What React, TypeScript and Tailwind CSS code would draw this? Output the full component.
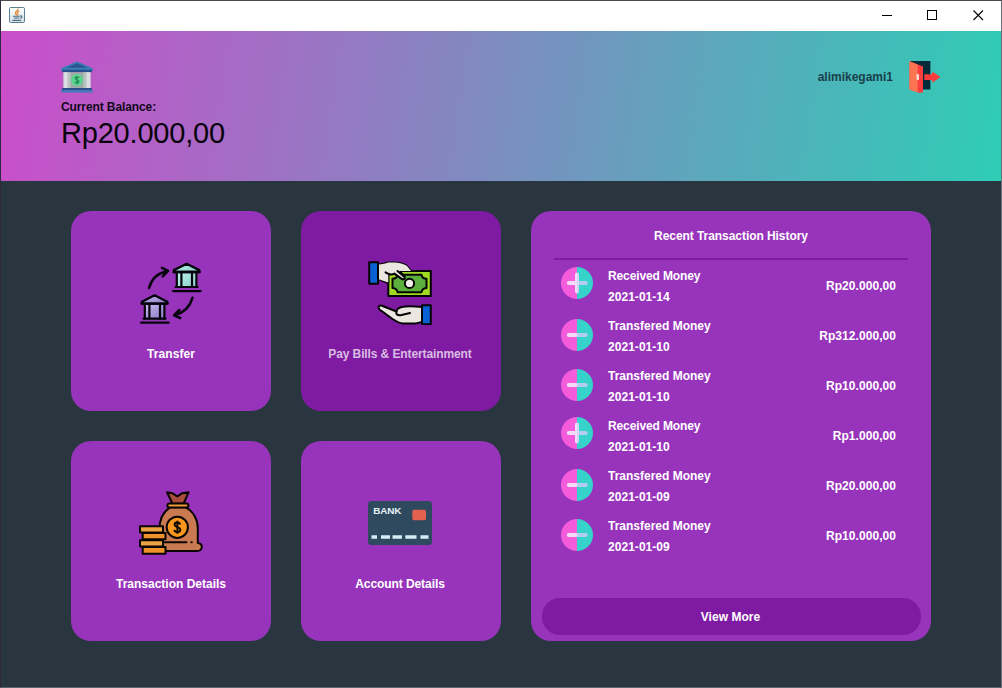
import React from "react";

type Tx = { kind: "in" | "out"; date: string; amount: string; icon: string };

const transactions: Tx[] = [
  { kind: "in", date: "2021-01-14", amount: "Rp20.000,00", icon: "mt-[3px]" },
  { kind: "out", date: "2021-01-10", amount: "Rp312.000,00", icon: "mt-[5px]" },
  { kind: "out", date: "2021-01-10", amount: "Rp10.000,00", icon: "mt-[5px]" },
  { kind: "in", date: "2021-01-10", amount: "Rp1.000,00", icon: "mt-[3px]" },
  { kind: "out", date: "2021-01-09", amount: "Rp20.000,00", icon: "mt-[5px]" },
  { kind: "out", date: "2021-01-09", amount: "Rp10.000,00", icon: "mt-[5px]" },
];

function JavaIcon() {
  return (
    <svg width="16" height="16" viewBox="0 0 16 16">
      <defs>
        <linearGradient id="jv" x1="0" y1="0" x2="0" y2="1">
          <stop offset="0" stopColor="#ffffff" />
          <stop offset="1" stopColor="#d3dde4" />
        </linearGradient>
      </defs>
      <rect x="0.5" y="0.5" width="15" height="15" rx="1.2" fill="url(#jv)" stroke="#5d7f95" />
      <path d="M9 1.6C9.8 3.4 6 4.6 6.4 6.3c.2.9 1.1 1.3 1.3 2.2M10.5 4C8.4 4.9 7.9 5.8 8.7 6.8c.4.6.2 1.1-.2 1.6" fill="none" stroke="#e28a35" strokeWidth="1.3" />
      <path d="M3.8 9.3h7M5 11h5.2M11 9c2.6-.6 2.4 2 .2 2.3M3.4 13.4h8.4" fill="none" stroke="#4b6f88" strokeWidth="1.1" />
    </svg>
  );
}

function BankIcon() {
  return (
    <svg width="32" height="32" viewBox="0 0 32 32">
      <path d="M0.3 7.3 15 0.8Q16 0.3 17 0.8L31.7 7.3V10H0.3Z" fill="#3b7cba" />
      <path d="M5.5 6.8 16 2.2 26.5 6.8Z" fill="#2a568f" />
      <path d="M1 8.8H31V11.2H1Z" fill="#27508c" />
      <path d="M2.5 11.2H29.5V27.5H2.5Z" fill="#a2aaa9" />
      <path d="M2.5 11.2H6.8V27.5H2.5ZM25.2 11.2H29.5V27.5H25.2Z" fill="#dadde3" />
      <path d="M6.8 11.2H9.5V27.5H6.8ZM22.5 11.2H25.2V27.5H22.5Z" fill="#b9c3c0" />
      <circle cx="16" cy="19" r="6" fill="#58d68d" />
      <path d="M18 17c-.5-1.5-3.8-1.5-3.8.2 0 2 3.8 1.2 3.8 3.4 0 1.9-3.5 1.9-4.1.2M16 14.9v8.4" fill="none" stroke="#268b58" strokeWidth="1.3" />
      <path d="M1 27H31V29.3H1Z" fill="#27508c" />
      <path d="M0.3 29.3H31.7V31.5H0.3Z" fill="#3b7cba" />
    </svg>
  );
}

function DoorIcon() {
  return (
    <svg width="32" height="32" viewBox="0 0 32 32">
      <path d="M1.5 0H21.4V28.5H12Z" fill="#052a38" />
      <path d="M0.5 0.3 14 5.4V31.6L10 31.8 0.5 28.4Z" fill="#fd3c3e" />
      <path d="M0.5 0.3 8.7 3.6V31.5L0.5 28.4Z" fill="#fc7451" />
      <rect x="7.5" y="13" width="2.5" height="6" rx="0.8" fill="#f7dfd6" />
      <path d="M15.3 13.3H23.3V10.6L31.4 16 23.3 21.8V18.9H15.3Z" fill="#fd3b3c" />
    </svg>
  );
}

function Temple({ x, y, from, to, id }: { x: number; y: number; from: string; to: string; id: string }) {
  return (
    <g transform={`translate(${x} ${y})`}>
      <defs>
        <linearGradient id={id} x1="0" y1="0" x2="1" y2="1">
          <stop offset="0" stopColor={from} />
          <stop offset="1" stopColor={to} />
        </linearGradient>
      </defs>
      <path d="M5 11H25V26H5Z" fill={`url(#${id})`} />
      <path d="M2.3 8.3 15 1.9 27.7 8.3V10.2H2.3Z" fill={`url(#${id})`} stroke="#05030c" strokeWidth="2.3" strokeLinejoin="round" />
      <path d="M2 10.2H28" stroke="#05030c" strokeWidth="2.4" strokeLinecap="round" />
      <path d="M5.2 10.5V26M9.8 10.5V26M20.4 10.5V26M24.8 10.5V26" stroke="#05030c" strokeWidth="2.2" />
      <path d="M4 25.2H26" stroke="#05030c" strokeWidth="2.2" strokeLinecap="round" />
      <path d="M1.5 29.3H29" stroke="#05030c" strokeWidth="2.3" strokeLinecap="round" />
    </g>
  );
}

function TransferIcon() {
  return (
    <svg width="64" height="64" viewBox="0 0 64 64">
      <Temple x={32.6} y={0.8} from="#c2f3ee" to="#83cdc4" id="tmA" />
      <Temple x={0.6} y={32.4} from="#c8bcf0" to="#8878c4" id="tmB" />
      <path d="M10 27C12.5 18 18.5 12 28 10.2M23 6.8 29 9.8 23.7 15.5" fill="none" stroke="#05030c" strokeWidth="2.5" strokeLinecap="round" strokeLinejoin="round" />
      <path d="M53.5 36.8C51 45.5 45 51.5 36 54M40.3 49 35 54.4 41.3 57" fill="none" stroke="#05030c" strokeWidth="2.5" strokeLinecap="round" strokeLinejoin="round" />
    </svg>
  );
}

function PayIcon() {
  return (
    <svg width="64" height="64" viewBox="0 0 64 64">
      <g stroke="#040404" strokeWidth="2" strokeLinejoin="round" strokeLinecap="round">
        <path d="M20.3 10H62.8V35H20.3Z" fill="#a1da22" />
        <path d="M29.5 13.8H53.5Q54 17.5 58.5 17.7V27Q54 27.5 53.5 31.2H29.5Q29 27.5 24.5 27V17.7Q29 17.5 29.5 13.8Z" fill="#5caf3d" />
        <circle cx="41.5" cy="22.4" r="4.6" fill="#f2eee8" />
        <path d="M10 3.5Q17 3 20 1.4H27.5Q35 2 39 5L43 10H32L36.5 16Q37 18.8 34.2 18.2L26.5 12.6 22 13.3 17.5 11.4M10 3.5V18Q15 20 20.3 22V14" fill="#ebe6df" />
        <path d="M10 3.5Q17 3 20 1.4H27.5Q35 2 39 5L43 10H32L28 12 20.3 14V21.5Q15 19.5 10 18Z" fill="#ebe6df" stroke="none" />
        <path d="M29.5 10 36.5 16Q37.2 18.8 34 18L26.5 12.6Q23 15 17.5 11.4" fill="#ebe6df" />
        <rect x="1.2" y="1.3" width="8.8" height="21.5" fill="#0862d4" />
        <path d="M54 46Q44 45 37 45.5 28.5 46.5 28.5 50.5L14 44.8Q10.7 44 10.6 46.7 10.6 48.3 14 50.3L24.5 58Q31 62.3 35 62.4H48L54 61Z" fill="#ebe6df" />
        <path d="M28.5 50.2Q27 54.4 32.5 54.2L42 52.1" fill="none" />
        <rect x="54" y="44.2" width="8.8" height="19" fill="#0862d4" />
      </g>
    </svg>
  );
}

function MoneyBagIcon() {
  return (
    <svg width="64" height="64" viewBox="0 0 64 64">
      <g stroke="#0a0502" strokeWidth="2" strokeLinejoin="round" strokeLinecap="round">
        <path d="M28 1.3 33.3 2.2 38.3 5.5 43.2 2.2 49.5 1.3 44.5 12.8H33.5Z" fill="#a84d3c" />
        <path d="M31 16.3C24 21 20.5 29 20.5 38V60H58C64 60 64.5 52.7 58.8 52V37C58.8 28 54 20 46.5 16.3Z" fill="#c97a50" />
        <rect x="28.4" y="12.6" width="21" height="4" rx="2" fill="#ec9a3a" />
        <circle cx="38.3" cy="36.3" r="10.6" fill="#f9971e" />
        <path d="M25.5 51.3H47.5M52.4 51.3H52.8" fill="none" />
        <path d="M1 35.2H24V41.5H1Z" fill="#eba344" />
        <path d="M3.7 42H26.5V48.3H3.7Z" fill="#f0932b" />
        <path d="M1 49.3H24V55.6H1Z" fill="#eba344" />
        <path d="M3.7 56H26.5V62.7H3.7Z" fill="#f0932b" />
      </g>
      <path d="M41.2 33.5C40.5 30.6 35.5 31 35.6 33.6 35.8 36.7 41.3 35.5 41.3 38.7 41.3 41.7 35.8 42 35.2 38.9M38.4 29.8V42.8" fill="none" stroke="#0a0502" strokeWidth="1.9" />
    </svg>
  );
}

function CardIcon() {
  return (
    <svg width="64" height="64" viewBox="0 0 64 64">
      <rect x="0" y="10" width="64" height="44" rx="3.5" fill="#2f495e" />
      <text x="5.2" y="23.4" fontFamily="Liberation Sans, sans-serif" fontWeight="bold" fontSize="9.9" fill="#e8f4f8">BANK</text>
      <rect x="44.3" y="18.8" width="13.7" height="10.4" rx="1.8" fill="#e4604f" />
      <path d="M3.5 46H9M13 46H22M24.5 46H34M37.3 46H48.5M52.5 46H60.5" stroke="#d5ecf5" strokeWidth="3.6" />
    </svg>
  );
}

function TxIcon({ plus }: { plus: boolean }) {
  return (
    <svg width="32" height="32" viewBox="0 0 32 32">
      <path d="M16 0A16 16 0 0 0 16 32Z" fill="#f55cdc" />
      <path d="M16 0A16 16 0 0 1 16 32Z" fill="#36d3cb" />
      <path d="M16 14H7.8a2 2 0 0 0 0 4H16Z" fill="#f3dcfa" />
      <path d="M16 14H24.8a2 2 0 0 1 0 4H16Z" fill="#b5ccf1" />
      {plus && (
        <>
          <path d="M16 5.6a2 2 0 0 0-2 2V24.5a2 2 0 0 0 2 2Z" fill="#f0dcfa" />
          <path d="M16 5.6a2 2 0 0 1 2 2V24.5a2 2 0 0 1-2 2Z" fill="#d3d5f7" />
        </>
      )}
    </svg>
  );
}

function Tile({ icon, label, className }: { icon: React.ReactNode; label: string; className: string }) {
  return (
    <button className={`flex h-[200px] w-[200px] flex-col items-center rounded-[20px] pt-[50px] ${className}`}>
      {icon}
      <span className="mt-[21px] text-[12px] leading-[16px] font-bold whitespace-nowrap">{label}</span>
    </button>
  );
}

export default function App() {
  return (
    <div className="flex h-[688px] w-[1002px] flex-col overflow-hidden border border-t-[#4b484e] border-r-[#68717a] border-b-[#5b646b] border-l-[#30283d] bg-[#2a363f] font-['Liberation_Sans',Arial,sans-serif]">
      <div className="flex h-[30px] shrink-0 items-center bg-white pl-2">
        <div className="-mt-[2px] flex-1">
          <JavaIcon />
        </div>
        <svg width="138" height="30" viewBox="0 0 138 30" fill="none" stroke="#000" shapeRendering="crispEdges">
          <path d="M19 14.5H29" />
          <rect x="64.5" y="9.5" width="9" height="9" />
          <path d="M110.5 9.5 120 19M120 9.5 110.5 19" shapeRendering="auto" strokeWidth="1.1" />
        </svg>
      </div>

      <header className="flex h-[150px] shrink-0 items-start justify-between bg-[linear-gradient(98.5deg,#cb4dca,#2ecdb6)] px-[60px] pt-[30px]">
        <div className="flex flex-col">
          <BankIcon />
          <div className="mt-[6px] text-[12px] leading-[16px] font-bold tracking-[-0.1px] text-[#10081a]">
            Current Balance:
          </div>
          <div className="mt-px text-[29px] leading-[34px] tracking-[-0.2px] text-[#08040c]">Rp20.000,00</div>
        </div>
        <div className="flex h-8 items-center gap-[16px]">
          <span className="text-[12px] font-bold text-[#19404a]">alimikegami1</span>
          <DoorIcon />
        </div>
      </header>

      <main className="flex gap-[30px] pt-[30px] pl-[70px]">
        <div className="grid grid-cols-[200px_200px] gap-[30px]">
          <Tile icon={<TransferIcon />} label="Transfer" className="bg-[#9834bb] tracking-[0.1px] text-white" />
          <Tile
            icon={<PayIcon />}
            label="Pay Bills & Entertainment"
            className="bg-[#7f1ba2] pr-[2px] tracking-[-0.11px] text-[#d9bde2]"
          />
          <Tile icon={<MoneyBagIcon />} label="Transaction Details" className="bg-[#9834bb] text-white" />
          <Tile
            icon={<CardIcon />}
            label="Account Details"
            className="bg-[#9834bb] pr-[2px] tracking-[-0.08px] text-white"
          />
        </div>

        <section className="flex h-[430px] w-[400px] flex-col rounded-[20px] bg-[#9834bb] text-[12px] leading-[16px] font-bold text-white">
          <h2 className="pt-[17px] text-center tracking-[-0.06px]">Recent Transaction History</h2>
          <div className="mx-[23px] mt-[14px] h-[2px] bg-[#7f1ba2]" />
          <ul className="mt-[4px]">
            {transactions.map((t, i) => (
              <li key={i} className="flex h-[50px] items-start pr-[35px] pl-[30px]">
                <span className={t.icon}>
                  <TxIcon plus={t.kind === "in"} />
                </span>
                <div className="ml-[15px] flex flex-1 flex-col gap-[5px] pt-[4px]">
                  {t.kind === "in" ? (
                    <span className="tracking-[-0.12px]">Received Money</span>
                  ) : (
                    <span>Transfered Money</span>
                  )}
                  <span className="tracking-[0.04px]">{t.date}</span>
                </div>
                <span className="pt-[14px] tracking-[0.06px]">{t.amount}</span>
              </li>
            ))}
          </ul>
          <button className="mr-[10px] ml-[11px] mt-auto mb-[6px] h-[37px] rounded-[18px] bg-[#7f1ba2] pr-[2px] tracking-[0.05px]">
            View More
          </button>
        </section>
      </main>
    </div>
  );
}
